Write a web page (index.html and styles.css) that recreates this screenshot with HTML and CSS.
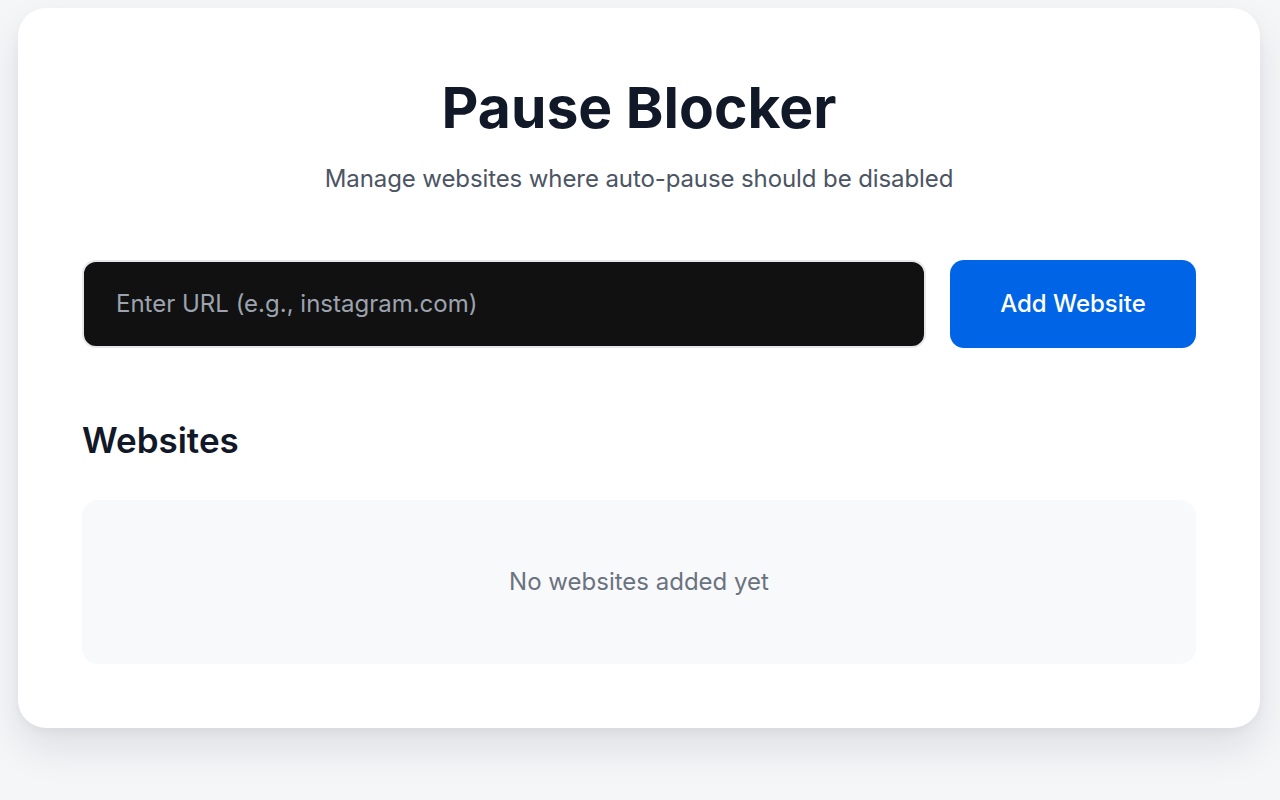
FILE: index.html
```html
<!DOCTYPE html>
<html lang="en">
<head>
<meta charset="utf-8">
<title>Pause Blocker</title>
<link rel="stylesheet" href="styles.css">
</head>
<body>
<main class="card">
  <header class="header">
    <h1 class="title">Pause Blocker</h1>
    <p class="subtitle">Manage websites where auto-pause should be disabled</p>
  </header>
  <form class="add-form">
    <input class="url-input" type="text" placeholder="Enter URL (e.g., instagram.com)">
    <button class="add-btn" type="button">Add Website</button>
  </form>
  <section class="list-section">
    <h2 class="section-title">Websites</h2>
    <div class="empty">No websites added yet</div>
  </section>
</main>
</body>
</html>
```

FILE: styles.css
```css
* { box-sizing: border-box; }
html, body {
  margin: 0;
  padding: 0;
}
body {
  background: #f5f6f8;
  font-family: Inter, "Noto Sans", sans-serif;
  color: #111827;
  padding: 8px 20px 0 18px;
  min-height: 800px;
}
.card {
  background: #ffffff;
  border-radius: 28px;
  padding: 66px 64px 64px 64px;
  box-shadow: 0 20px 40px rgba(17, 24, 39, 0.10), 0 4px 10px rgba(17, 24, 39, 0.04);
  width: 1242px;
}
.header {
  text-align: center;
  margin-bottom: 64px;
}
.title {
  margin: 0;
  font-size: 57px;
  font-weight: 700;
  line-height: 1.2;
  color: #111827;
}
.subtitle {
  margin: 20px 0 0;
  font-size: 24px;
  line-height: 1.4;
  letter-spacing: -0.1px;
  color: #4b5563;
}
.add-form {
  display: flex;
  gap: 24px;
  align-items: stretch;
}
.url-input {
  flex: 1;
  height: 88px;
  background: #111111;
  border: 2px solid #e5e7eb;
  border-radius: 14px;
  padding: 0 32px;
  font-family: inherit;
  font-size: 24px;
  color: #ffffff;
  outline: none;
}
.url-input::placeholder { color: #9ca3af; }
.add-btn {
  width: 246px;
  height: 88px;
  background: #0064e6;
  color: #ffffff;
  border: none;
  border-radius: 14px;
  font-family: inherit;
  font-size: 24px;
  font-weight: 500;
  cursor: pointer;
}
.list-section {
  margin-top: 71px;
}
.section-title {
  margin: 0 0 39px;
  font-size: 35px;
  font-weight: 600;
  line-height: 1.2;
  color: #111827;
}
.empty {
  background: #f8f9fb;
  border-radius: 16px;
  height: 164px;
  display: flex;
  align-items: center;
  justify-content: center;
  font-size: 24px;
  color: #6b7280;
}
```
